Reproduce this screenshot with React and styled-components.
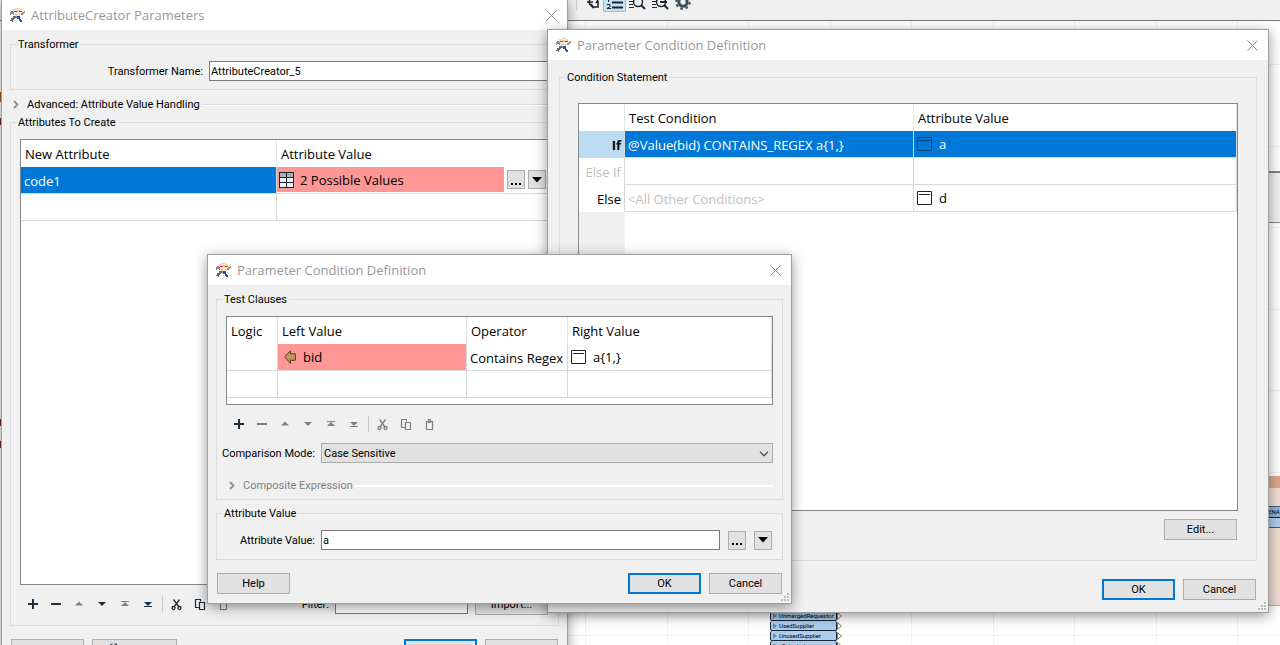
import React from "react";
import styled, { createGlobalStyle, css } from "styled-components";

const ui = `Roboto, "Liberation Sans", sans-serif`;
const segoe = `"Open Sans", "Noto Sans", sans-serif`;

const GlobalStyle = createGlobalStyle`
  *, *::before, *::after { box-sizing: border-box; }
  body { margin: 0; background: #fff; font: 11px/15px ${ui}; color: #000; }
  button, input, select { font: inherit; color: inherit; margin: 0; border-radius: 0; outline: none; }
`;

/* ---------- desktop and the workspace behind the dialogs ---------- */

const Desktop = styled.main`
  position: relative;
  height: 100vh;
  overflow: hidden;
  background: #fff;
`;

const AppToolbar = styled.div`
  display: flex;
  align-items: flex-start;
  height: 21px;
  padding-left: 576px;
  background: #f0f0f0;
  border-bottom: 1px solid #787878;
`;

const Workspace = styled.svg`
  display: block;
  width: 100%;
  height: calc(100vh - 21px);
`;

const PortList = styled.ul`
  position: absolute;
  left: 770px;
  top: 611px;
  margin: 0;
  padding: 0;
  list-style: none;
`;

const Port = styled.li`
  display: flex;
  align-items: center;
  gap: 2px;
  width: 67px;
  height: 10px;
  padding-left: 2px;
  background: #aacdee;
  border: 1px solid #1c2733;
  border-top-width: 0;
  border-radius: 2px;
  font: 6px/9px ${ui};
  white-space: nowrap;

  svg { flex: none; }
  svg:last-child { margin-left: auto; margin-right: -6px; }
`;

const SidePanel = styled.div`
  position: absolute;
  right: 0;
  top: 171px;
  width: 24px;
  height: 52px;
  background: #f0f0f0;
  border-top: 2px solid #828282;
  border-bottom: 1px solid #828790;
`;

const Bookmark = styled.div`
  position: absolute;
  right: 0;
  top: 476px;
  width: 24px;
  height: 130px;
  padding-top: 18px;
  background: #f0dbd1;
  border-top: 12px solid #dfa58c;
  border-bottom: 1px solid #dfa58c;
`;

const BookmarkNode = styled.div`
  height: 22px;
  padding-left: 12px;
  overflow: hidden;
  background: linear-gradient(#8ab1df 0 10px, #1c2733 10px 11px, #aecdeb 11px);
  border: solid #4b5a68;
  border-width: 1px 0;
  font: 6px/10px ${ui};
`;

/* ---------- dialog frame ---------- */

const Frame = styled.section`
  position: absolute;
  left: ${(p) => p.$x}px;
  top: ${(p) => p.$y}px;
  width: ${(p) => p.$w}px;
  background: #f0f0f0;
  border: 1px solid #a0a0a0;
  box-shadow: 0 3px 12px rgba(0, 0, 0, 0.42);
`;

const TitleBar = styled.header`
  display: flex;
  align-items: center;
  gap: 6px;
  height: 30px;
  padding: 0 10px 0 7px;
  background: #fff;
`;

const Title = styled.h1`
  flex: 1;
  margin: 0;
  color: #999;
  font: 13px/20px ${segoe};
`;

const CloseButton = styled.button`
  display: flex;
  padding: 0;
  border: 0;
  background: none;
`;

const Body = styled.div`
  display: flex;
  flex-direction: column;
  padding: ${(p) => p.$pad};
`;

const Group = styled.fieldset`
  min-width: 0;
  margin: ${(p) => p.$gap || 0}px 0 0;
  padding: 0;
  border: 1px solid #dcdcdc;
`;

const Legend = styled.legend`
  margin-left: 5px;
  padding: 0 2px;
  line-height: 15px;
`;

const GroupBody = styled.div`
  display: flex;
  flex-direction: column;
  padding: ${(p) => p.$pad || "9px"};
`;

const Disclosure = styled.button`
  display: flex;
  align-items: center;
  height: 15px;
  margin: ${(p) => p.$margin};
  padding: 0;
  border: 0;
  background: none;
  color: ${(p) => (p.$dim ? "#808080" : "#000")};

  svg { margin: 0 8px 0 3px; }

  &::after {
    content: "";
    flex: 1;
    height: 2px;
    margin-left: 2px;
    background: #fff;
    border-top: ${(p) => (p.$dim ? "0" : "1px solid #dcdcdc")};
  }
`;

const Field = styled.div`
  display: grid;
  grid-template-columns: ${(p) => p.$label}px 1fr;
  gap: 6px;
  align-items: center;
  margin-top: ${(p) => p.$gap || 0}px;

  label {
    justify-self: end;
    white-space: nowrap;
  }
`;

const TextInput = styled.input`
  width: ${(p) => p.$w || "100%"};
  min-width: 0;
  height: 20px;
  padding: 0 1px;
  border: 1px solid #7a7a7a;
  background: #fff;
`;

const InputWithButtons = styled.div`
  display: flex;
  align-items: center;
  gap: 8px;
  padding-right: 1px;
`;

const SelectBox = styled.div`
  position: relative;

  select {
    display: block;
    width: 100%;
    height: 20px;
    padding: 0 2px;
    appearance: none;
    background: #e1e1e1;
    border: 1px solid #adadad;
  }

  svg {
    position: absolute;
    right: 4px;
    top: 8px;
    pointer-events: none;
  }
`;

const PushButton = styled.button`
  display: flex;
  align-items: center;
  justify-content: center;
  width: 73px;
  height: 21px;
  padding: 0;
  background: #e1e1e1;
  border: ${(p) => (p.$primary ? "2px solid #0078d7" : "1px solid #adadad")};
`;

const DefaultsButton = styled(PushButton)`
  justify-content: flex-start;
  width: 85px;
  padding-left: 14px;
`;

const MiniButton = styled.button`
  display: flex;
  flex: none;
  align-items: center;
  justify-content: center;
  width: 18px;
  height: 19px;
  padding: 0;
  background: #e1e1e1;
  border: 1px solid #adadad;
`;

const ButtonRow = styled.footer`
  display: flex;
  gap: 8px;
  padding: 0 1px;
  margin-top: ${(p) => p.$gap}px;
`;

const Spacer = styled.span`
  flex: 1;
`;

const EditRow = styled.div`
  display: flex;
  justify-content: flex-end;
  margin-top: 8px;
  padding-right: 1px;
`;

const ResizeGrip = styled.svg`
  position: absolute;
  right: 2px;
  bottom: 2px;
`;

/* ---------- list toolbar ---------- */

const ListTools = styled.div`
  display: flex;
  align-items: center;
  height: 24px;
  margin-top: 7px;
  padding: 0 1px;
`;

const ToolButton = styled.button`
  display: flex;
  align-items: center;
  justify-content: center;
  width: 23px;
  height: 23px;
  padding: 0;
  border: 0;
  background: none;
  color: ${(p) => (p.$off ? "#808080" : "#1c2f3a")};
`;

const ToolDivider = styled.span`
  width: 1px;
  height: 16px;
  margin: 0 2px 0 3px;
  background: #c8c8c8;
`;

const FilterLabel = styled.label`
  margin: 0 6px 0 auto;
`;

const ImportButton = styled(PushButton)`
  margin-left: 7px;
`;

/* ---------- tables ---------- */

const TableFrame = styled.div`
  height: ${(p) => p.$h}px;
  border: 1px solid #828790;
  background: ${(p) =>
    p.$gutter
      ? `linear-gradient(90deg, #f0f0f0 0 ${p.$gutter}px, #fff ${p.$gutter}px)`
      : "#fff"};
  overflow: hidden;
`;

const Table = styled.table`
  width: 100%;
  table-layout: fixed;
  border-collapse: separate;
  border-spacing: 0;
  background: #fff;
  font: 13px/18px ${segoe};
`;

const Head = styled.th`
  height: 27px;
  padding: 1px 4px 0;
  border-right: 1px solid #e5e5e5;
  font-weight: normal;
  text-align: left;
  white-space: nowrap;
`;

const tones = {
  pink: css`background: #ff9797;`,
  selected: css`background: #0078d7; color: #fff;`,
  faint: css`color: #c0c0c0;`,
};

const Cell = styled.td`
  height: 27px;
  padding: 1px 0 0 3px;
  border-right: 1px solid #d8d8d8;
  border-bottom: 1px solid #d8d8d8;
  white-space: nowrap;
  ${(p) => tones[p.$tone]}
`;

const RowHead = styled.th`
  height: 27px;
  padding: 1px 3px 0 0;
  border-right: 1px solid #d8d8d8;
  text-align: right;
  font-weight: ${(p) => (p.$current ? 700 : 400)};
  color: ${(p) => (p.$faint ? "#c0c0c0" : "#000")};
  background: ${(p) => (p.$current ? "#bcdcf4" : "#fff")};
`;

const ValueCell = styled(Cell)`
  padding: 0;
`;

const Value = styled.div`
  display: flex;
  flex: 1;
  align-items: center;
  gap: ${(p) => p.$gap || 6}px;
  height: ${(p) => p.$h || 26}px;
  padding-left: ${(p) => p.$indent || 3}px;
  line-height: 20px;
  ${(p) => tones[p.$tone]}
`;

const ValueEditor = styled.div`
  display: flex;
  align-items: flex-start;
  gap: 3px;
  height: 26px;
  padding-right: 1px;

  button { margin-top: 3px; }
`;

/* ---------- icons ---------- */

const Mascot = () => (
  <svg width="16" height="16" viewBox="0 0 16 16">
    <path d="M4 2h2V1h5v1h2v3H4z" fill="#e6d6b4" />
    <path d="M2 4h2v1h2v3H4V7H2v1H1V5h1z" fill="#8b8b8b" />
    <path d="M15 4h1v2h-1v1h-1v1h-3V6h2V5h2z" fill="#b98a72" />
    <path d="M5 5h7v4h-1v1H6V9H5z" fill="#f4e6dc" />
    <path d="M5 4h3v1H5zM10 4h3v1h-3z" fill="#e02a20" />
    <path d="M6 2h5v1H6z" fill="#fbe9c8" />
    <path d="M8 4h2v1H8z" fill="#f5b93c" />
    <path d="M6 7h2v1H6zM10 7h1v1h-1z" fill="#c9b9b0" />
    <path d="M7 9h4v2H7z" fill="#7f93b0" />
    <path d="M4 9h3v2H6v1H5v1H4v2H3v-1H1v-1h1v-2h2z" fill="#6a6a6a" />
    <path d="M8 9h3v3h1v1h1v2h-2v-1h-1v-2H8z" fill="#2450b5" />
  </svg>
);

const CloseIcon = () => (
  <svg width="11" height="11" viewBox="0 0 11 11">
    <path d="M.5.5l10 10M10.5.5l-10 10" stroke="#8a8a8a" fill="none" />
  </svg>
);

const Chevron = () => (
  <svg width="6" height="9" viewBox="0 0 6 9">
    <path d="M1 1l3.500 3.500L1 8" stroke="#8f8f8f" strokeWidth="1.800" fill="none" />
  </svg>
);

const ChevronDown = () => (
  <svg width="10" height="6" viewBox="0 0 10 6">
    <path d="M1 .8l4 4 4-4" stroke="#505050" strokeWidth="1.300" fill="none" />
  </svg>
);

const Caret = () => (
  <svg width="10" height="6" viewBox="0 0 10 6">
    <path d="M0 0h10L5 5.500z" fill="#000" />
  </svg>
);

const Dots = () => (
  <svg width="12" height="12" viewBox="0 0 12 12">
    <path d="M1 9h2v2H1zM5 9h2v2H5zM9 9h2v2H9z" fill="#000" />
  </svg>
);

const TextIcon = ({ color = "#1c2733" }) => (
  <svg width="15" height="14" viewBox="0 0 15 14">
    <path d="M.5.5h14v13H.5zM2 3.500h11" stroke={color} fill="none" />
  </svg>
);

const TableIcon = () => (
  <svg width="15" height="16" viewBox="0 0 15 16">
    <path d="M0 0h15v16H0z" fill="#1c2733" />
    <path d="M1 1h6v4H1zM8 1h6v4H8z" fill="#aab0b5" />
    <path d="M1 6h6v4H1zM8 6h6v4H8zM1 11h6v4H1zM8 11h6v4H8z" fill="#e9eff5" />
  </svg>
);

const AttributeIcon = () => (
  <svg width="12" height="14" viewBox="0 0 12 14">
    <path d="M.7 7L6.500.8v3h4.800v6.500H6.500v3z" fill="#c2975b" stroke="#4f3a1d" />
  </svg>
);

const glyphs = {
  add: <path d="M7 3h2v4h4v2H9v4H7V9H3V7h4z" fill="currentColor" />,
  remove: <path d="M3 7h10v2H3z" fill="currentColor" />,
  up: <path d="M8 5.500l4 4H4z" fill="currentColor" />,
  down: <path d="M4 6h8l-4 4z" fill="currentColor" />,
  top: <path d="M4 5h8v1H4zM8 6l4 4H4z" fill="currentColor" />,
  bottom: <path d="M4 6h8l-4 4zM4 10h8v1H4z" fill="currentColor" />,
  cut: (
    <g fill="none" stroke="currentColor" strokeWidth="1.300">
      <path d="M4.500 3.500l5.500 7.500M10.500 3.500L5 11" />
      <circle cx="4.500" cy="12" r="1.500" />
      <circle cx="10.500" cy="12" r="1.500" />
    </g>
  ),
  copy: (
    <path d="M7.500 11.500h-4v-8h5v2M7.500 6.500h5v7h-5z" fill="none" stroke="currentColor" strokeWidth="1.200" />
  ),
  paste: (
    <path d="M5.500 5.500h6v8h-6zM7.500 5.500v-2h2v3h-2z" fill="none" stroke="currentColor" strokeWidth="1.200" />
  ),
};

const Glyph = ({ name }) => (
  <svg width="16" height="16" viewBox="0 0 16 16">{glyphs[name]}</svg>
);

const Gear = ({ size = 16 }) => (
  <svg width={size} height={size} viewBox="0 0 16 16">
    <circle cx="8" cy="8" r="6.800" fill="none" stroke="#3b4f5c" strokeWidth="2" strokeDasharray="2.670 2.670" />
    <circle cx="8" cy="8" r="4.200" fill="none" stroke="#3b4f5c" strokeWidth="3" />
  </svg>
);

const Grip = () => (
  <ResizeGrip width="8" height="8" viewBox="0 0 8 8">
    <path d="M6 0h2v2H6zM3 3h2v2H3zM6 3h2v2H6zM0 6h2v2H0zM3 6h2v2H3zM6 6h2v2H6z" fill="#bdbdbd" />
  </ResizeGrip>
);

const ToolbarDrawing = () => (
  <svg width="120" height="20" viewBox="576 0 120 20">
    <path d="M576.500 0v10" stroke="#cfcfcf" />
    <path d="M587 2h6M589.500 0v4l4 4M594 7h4V1M591 4l3 4M596 3l2-3" stroke="#1c2733" strokeWidth="1.600" fill="none" />
    <path d="M603.500 -1h22v12.500h-22z" fill="#c4e0f5" stroke="#8cc2ea" />
    <path d="M612 2.500h11M612 7.500h11" stroke="#1c2733" strokeWidth="2" />
    <path d="M607 4.500h3v2l-3 2h4M608.500 0v2" stroke="#1c2733" fill="none" />
    <path d="M629 1.500h4M629 4.500h4M629 7.500h5M652 1.500h4M652 4.500h4M652 7.500h5" stroke="#1c2733" />
    <circle cx="638" cy="2" r="4.500" fill="none" stroke="#1c2733" strokeWidth="1.500" />
    <circle cx="661" cy="2" r="4.500" fill="none" stroke="#1c2733" strokeWidth="1.500" />
    <path d="M641 5l4 4M664 5l4 4M660 2h7" stroke="#1c2733" strokeWidth="2" />
    <g transform="translate(675 -6)"><Gear /></g>
  </svg>
);

/* ---------- shared pieces ---------- */

function Dialog({ x, y, w, title, grip, children }) {
  return (
    <Frame $x={x} $y={y} $w={w} aria-label={title}>
      <TitleBar>
        <Mascot />
        <Title>{title}</Title>
        <CloseButton aria-label="Close"><CloseIcon /></CloseButton>
      </TitleBar>
      {children}
      {grip && <Grip />}
    </Frame>
  );
}

const toolNames = ["add", "remove", "up", "down", "top", "bottom", "cut", "copy", "paste"];

function Tools({ disabled, children }) {
  return (
    <ListTools>
      {toolNames.map((name) => (
        <React.Fragment key={name}>
          {name === "cut" && <ToolDivider />}
          <ToolButton aria-label={name} $off={disabled.includes(name)}>
            <Glyph name={name} />
          </ToolButton>
        </React.Fragment>
      ))}
      {children}
    </ListTools>
  );
}

/* ---------- dialogs ---------- */

function CreatorDialog() {
  return (
    <Dialog x={1} y={-1} w={567} title="AttributeCreator Parameters">
      <Body $pad="7px 8px 9px">
        <Group>
          <Legend>Transformer</Legend>
          <GroupBody $pad="9px 9px 8px">
            <Field $label={183}>
              <label htmlFor="transformer-name">Transformer Name:</label>
              <TextInput id="transformer-name" defaultValue="AttributeCreator_5" />
            </Field>
          </GroupBody>
        </Group>
        <Disclosure $margin="7px 0 3px"><Chevron />Advanced: Attribute Value Handling</Disclosure>
        <Group>
          <Legend>Attributes To Create</Legend>
          <GroupBody>
            <TableFrame $h={446}>
              <Table>
                <colgroup><col style={{ width: 256 }} /><col /></colgroup>
                <thead>
                  <tr><Head>New Attribute</Head><Head>Attribute Value</Head></tr>
                </thead>
                <tbody>
                  <tr>
                    <Cell $tone="selected">code1</Cell>
                    <ValueCell>
                      <ValueEditor>
                        <Value $h={25} $tone="pink" $indent={2}><TableIcon />2 Possible Values</Value>
                        <MiniButton aria-label="Edit value"><Dots /></MiniButton>
                        <MiniButton aria-label="Value menu"><Caret /></MiniButton>
                      </ValueEditor>
                    </ValueCell>
                  </tr>
                  <tr><Cell /><Cell /></tr>
                </tbody>
              </Table>
            </TableFrame>
            <Tools disabled={["up", "top", "paste"]}>
              <FilterLabel htmlFor="filter">Filter:</FilterLabel>
              <TextInput id="filter" $w="133px" />
              <ImportButton>Import...</ImportButton>
            </Tools>
          </GroupBody>
        </Group>
        <ButtonRow $gap={13}>
          <PushButton aria-label="Help" />
          <DefaultsButton aria-label="Defaults"><Gear size={14} /></DefaultsButton>
          <Spacer />
          <PushButton $primary aria-label="OK" />
          <PushButton aria-label="Cancel" />
        </ButtonRow>
      </Body>
    </Dialog>
  );
}

function ConditionDialog() {
  return (
    <Dialog x={547} y={29} w={722} title="Parameter Condition Definition" grip>
      <Body $pad="10px 11px 12px">
        <Group>
          <Legend>Condition Statement</Legend>
          <GroupBody $pad="18px 18px 20px">
            <TableFrame $h={408} $gutter={46}>
              <Table>
                <colgroup><col style={{ width: 46 }} /><col style={{ width: 289 }} /><col /></colgroup>
                <thead>
                  <tr><Head /><Head>Test Condition</Head><Head>Attribute Value</Head></tr>
                </thead>
                <tbody>
                  <tr>
                    <RowHead $current>If</RowHead>
                    <Cell $tone="selected">@Value(bid) CONTAINS_REGEX a&#123;1,&#125;</Cell>
                    <ValueCell $tone="selected"><Value $gap={7}><TextIcon color="#0b3f78" />a</Value></ValueCell>
                  </tr>
                  <tr><RowHead $faint>Else If</RowHead><Cell /><Cell /></tr>
                  <tr>
                    <RowHead>Else</RowHead>
                    <Cell $tone="faint">&lt;All Other Conditions&gt;</Cell>
                    <ValueCell><Value $gap={7}><TextIcon />d</Value></ValueCell>
                  </tr>
                </tbody>
              </Table>
            </TableFrame>
            <EditRow><PushButton>Edit...</PushButton></EditRow>
          </GroupBody>
        </Group>
        <ButtonRow $gap={18}>
          <Spacer />
          <PushButton $primary>OK</PushButton>
          <PushButton>Cancel</PushButton>
        </ButtonRow>
      </Body>
    </Dialog>
  );
}

function ClauseDialog() {
  return (
    <Dialog x={207} y={254} w={585} title="Parameter Condition Definition" grip>
      <Body $pad="7px 8px 9px">
        <Group>
          <Legend>Test Clauses</Legend>
          <GroupBody $pad="9px 9px 6px">
            <TableFrame $h={89}>
              <Table>
                <colgroup>
                  <col style={{ width: 51 }} /><col style={{ width: 189 }} />
                  <col style={{ width: 101 }} /><col />
                </colgroup>
                <thead>
                  <tr><Head>Logic</Head><Head>Left Value</Head><Head>Operator</Head><Head>Right Value</Head></tr>
                </thead>
                <tbody>
                  <tr>
                    <Cell />
                    <ValueCell $tone="pink"><Value $indent={6} $gap={7}><AttributeIcon />bid</Value></ValueCell>
                    <Cell>Contains Regex</Cell>
                    <ValueCell><Value $gap={7}><TextIcon />a&#123;1,&#125;</Value></ValueCell>
                  </tr>
                  <tr><Cell /><Cell /><Cell /><Cell /></tr>
                </tbody>
              </Table>
            </TableFrame>
            <Tools disabled={toolNames.slice(1)} />
            <Field $label={89} $gap={7}>
              <label htmlFor="comparison">Comparison Mode:</label>
              <SelectBox>
                <select id="comparison"><option>Case Sensitive</option></select>
                <ChevronDown />
              </SelectBox>
            </Field>
            <Disclosure $dim $margin="15px 0 0"><Chevron />Composite Expression</Disclosure>
          </GroupBody>
        </Group>
        <Group $gap={6}>
          <Legend>Attribute Value</Legend>
          <GroupBody>
            <Field $label={89}>
              <label htmlFor="attribute-value">Attribute Value:</label>
              <InputWithButtons>
                <TextInput id="attribute-value" defaultValue="a" />
                <MiniButton aria-label="Edit value"><Dots /></MiniButton>
                <MiniButton aria-label="Value menu"><Caret /></MiniButton>
              </InputWithButtons>
            </Field>
          </GroupBody>
        </Group>
        <ButtonRow $gap={13}>
          <PushButton>Help</PushButton>
          <Spacer />
          <PushButton $primary>OK</PushButton>
          <PushButton>Cancel</PushButton>
        </ButtonRow>
      </Body>
    </Dialog>
  );
}

const ports = ["UnmergedRequestor", "UsedSupplier", "UnusedSupplier", "<Rejected>"];
const columns = [585, 667, 748, 830, 911, 993, 1074, 1156, 1237];
const rows = [43, 125, 206, 288, 369, 451, 532, 614];

export default function App() {
  return (
    <Desktop>
      <GlobalStyle />
      <AppToolbar><ToolbarDrawing /></AppToolbar>
      <Workspace aria-hidden="true">
        <g fill="#f0f0f0">
          {columns.map((x) => <rect key={x} x={x} y="0" width="1" height="100%" />)}
          {rows.map((y) => <rect key={y} x="0" y={y} width="100%" height="1" />)}
        </g>
        <path d="M0 71h1v10H0z" fill="#b05a10" />
        <path d="M0 97h1v7H0zM0 398h1v7H0zM0 420h1v7H0z" fill="#7a2a1c" />
      </Workspace>
      <PortList>
        {ports.map((name) => (
          <Port key={name}>
            <svg width="4" height="6" viewBox="0 0 4 6"><path d="M0 0l4 3-4 3z" fill="#6d8aa6" /></svg>
            {name}
            <svg width="5" height="8" viewBox="0 0 5 8"><path d="M.5.5L4.500 4 .5 7.500z" fill="#fff" stroke="#777" /></svg>
          </Port>
        ))}
      </PortList>
      <SidePanel />
      <Bookmark><BookmarkNode>ENA</BookmarkNode></Bookmark>
      <CreatorDialog />
      <ConditionDialog />
      <ClauseDialog />
    </Desktop>
  );
}
